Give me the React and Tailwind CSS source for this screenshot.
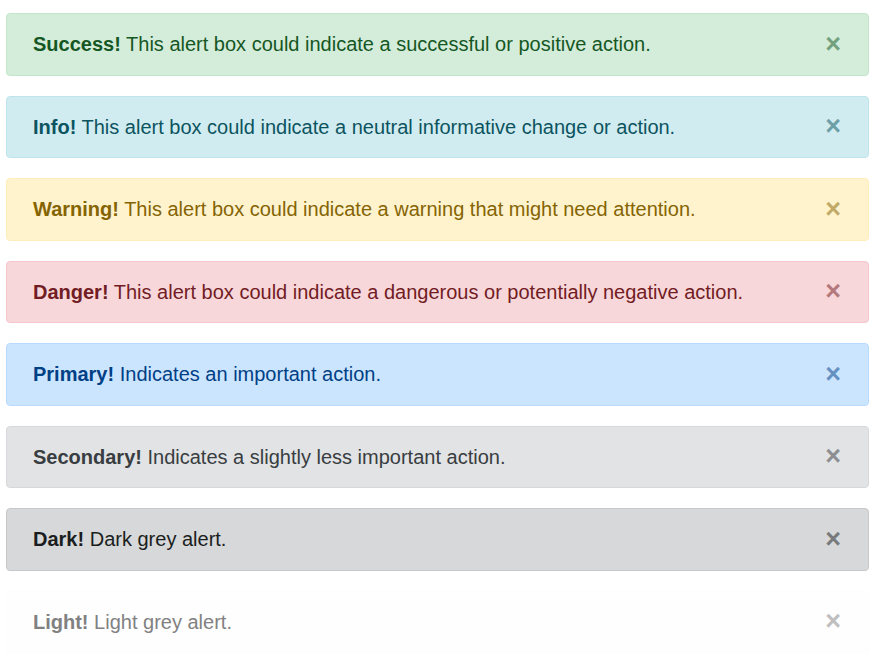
export default function App() {
  const alerts = [
    { t: "Success!", m: "This alert box could indicate a successful or positive action.", c: "bg-[#d4edda] border-[#c3e6cb] text-[#155724]" },
    { t: "Info!", m: "This alert box could indicate a neutral informative change or action.", c: "bg-[#d1ecf1] border-[#bee5eb] text-[#0c5460]" },
    { t: "Warning!", m: "This alert box could indicate a warning that might need attention.", c: "bg-[#fff3cd] border-[#ffeeba] text-[#856404]" },
    { t: "Danger!", m: "This alert box could indicate a dangerous or potentially negative action.", c: "bg-[#f8d7da] border-[#f5c6cb] text-[#721c24]" },
    { t: "Primary!", m: "Indicates an important action.", c: "bg-[#cce5ff] border-[#b8daff] text-[#004085]" },
    { t: "Secondary!", m: "Indicates a slightly less important action.", c: "bg-[#e2e3e5] border-[#d6d8db] text-[#383d41]" },
    { t: "Dark!", m: "Dark grey alert.", c: "bg-[#d6d8d9] border-[#c6c8ca] text-[#1b1e21]" },
    { t: "Light!", m: "Light grey alert.", c: "bg-[#fefefe] border-[#fdfdfe] text-[#818182]" },
  ];
  return (
    <div className="bg-white min-h-[665px] pt-[13px] pl-[6px] font-['Liberation_Sans',Arial,sans-serif]">
      <div className="w-[863px] flex flex-col gap-[20px]">
        {alerts.map((a) => (
          <div key={a.t} className={`border rounded-[4px] flex items-center justify-between pl-[26px] pr-[27px] py-[16.25px] text-[20px] leading-[28px] ${a.c}`}>
            <div>
              <strong className="font-bold">{a.t}</strong> {a.m}
            </div>
            <span className="text-[27px] font-bold leading-none opacity-50">×</span>
          </div>
        ))}
      </div>
    </div>
  );
}
